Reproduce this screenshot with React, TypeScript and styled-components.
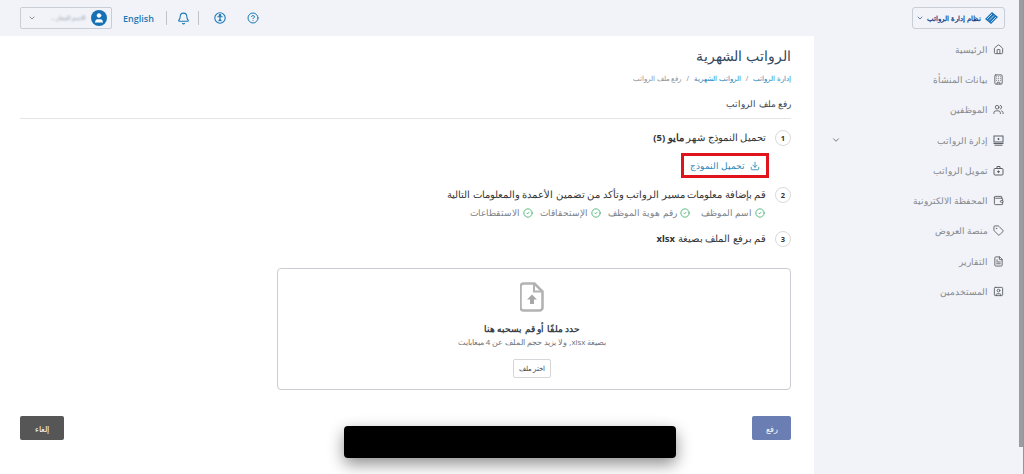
import React from "react";
import styled, { createGlobalStyle } from "styled-components";
import { Home, Building, Users, ChevronDown, Tag, FileText, Download, CircleCheck, Bell, CircleHelp, User, Wallet, SquareUser } from "lucide-react";

const Global = createGlobalStyle`
  html, body { margin: 0; padding: 0; background: #fff; overflow: hidden; }
  body { font-family: "Noto Sans", "Noto Sans CJK SC", "Liberation Sans", sans-serif; }
  * { box-sizing: border-box; }
`;
const Page = styled.div`
  direction: ltr; width: 1024px; height: 474px; display: grid; grid-template-columns: 814px 210px; overflow: hidden; position: relative;
`;
const Main = styled.main`display: flex; flex-direction: column; min-width: 0;`;
const TopBar = styled.header`
  height: 36px; background: #f1f3f8; display: flex; align-items: center; padding-left: 20px; flex: none;
`;
const UserBox = styled.div`
  width: 92px; height: 22px; border: 1px solid #c9cdd6; border-radius: 2px; display: flex; align-items: center; padding: 0 4px 0 7px; justify-content: space-between; color: #4d5b72;
`;
const Blurred = styled.span`font-size: 6px; color: #9aa0ab; filter: blur(1px); margin-left: 10px; direction: rtl; white-space: nowrap;`;
const Avatar = styled.span`
  width: 16px; height: 16px; border-radius: 50%; background: #1670b4; color: #fff; display: flex; align-items: center; justify-content: center;
`;
const Lang = styled.span`font-size: 9px; font-weight: 600; color: #1b79b5; margin: 0 12px 0 11px; font-family: "Open Sans", sans-serif;`;
const Sep = styled.span`width: 1px; height: 14px; background: #bfc4cc;`;
const IconBlue = styled.span`color: #1b79b5; display: flex; align-items: center; margin: 0 ${p => p.$right ?? 0}px 0 ${p => p.$left ?? 0}px;`;
const Content = styled.div`
  flex: 1; direction: rtl; padding: 10px 23px 0 20px; display: flex; flex-direction: column; min-height: 0;
`;
const Title = styled.h1`margin: 0; font-size: 13.5px; font-weight: 400; line-height: 20px; color: #33475b;`;
const Crumbs = styled.div`display: flex; gap: 5px; margin-top: 8px; font-size: 6.8px; line-height: 10px; color: #8b8f96;`;
const Crumb = styled.span`color: ${p => (p.$link ? "#2a86b8" : "#8b8f96")};`;
const Sub = styled.h2`margin: 13px 0 0; font-size: 9.2px; font-weight: 400; line-height: 14px; color: #3d4450; padding-bottom: 7px; border-bottom: 1px solid #e3e5e8;`;
const Step = styled.div`display: flex; align-items: center; gap: 9px; margin-top: ${p => p.$mt}px; height: 16px;`;
const Num = styled.span`
  width: 16px; height: 16px; border-radius: 50%; border: 1px solid #d8dade; font-size: 7.5px; font-weight: 700; color: #333; display: flex; align-items: center; justify-content: center; flex: none; font-family: "Open Sans", sans-serif;
`;
const StepText = styled.span`font-size: 9.5px; color: #333; line-height: 14px; b { font-weight: 700; }`;
const DlRow = styled.div`display: flex; margin: 7px 22px 0 0;`;
const DlLink = styled.a`
  width: 88px; height: 25px; border: 3px solid #e0141c; display: flex; align-items: center; justify-content: center; gap: 5px; color: #2a86b8; font-size: 9px;
`;
const Checks = styled.div`display: flex; margin: 4px 26px 0 0;`;
const Check = styled.span`display: flex; align-items: center; gap: 3px; font-size: 8.8px; line-height: 12px; color: #7b8087; margin-left: ${p => p.$after}px; svg { color: #3fae6a; flex: none; }`;
const Drop = styled.section`
  width: 514px; height: 122px; margin-top: 21px; flex: none; border: 1px solid #c9ccd1; border-radius: 4px; display: flex; flex-direction: column; align-items: center; padding: 13px 4px 0 0;
`;
const DropTitle = styled.div`font-size: 9.2px; font-weight: 600; line-height: 12px; color: #3a3f47; margin-top: 11px;`;
const DropSub = styled.div`font-size: 7.8px; line-height: 12px; color: #70757c; margin-top: 1px;`;
const PickBtn = styled.button`
  width: 38px; height: 19px; margin-top: 11px; background: #fff; border: 1px solid #d4d6da; border-radius: 2px; font: inherit; font-size: 6.5px; color: #444; padding: 0;
`;
const Actions = styled.div`display: flex; justify-content: space-between; margin-top: 26px;`;
const Btn = styled.button`
  width: ${p => p.$w}px; height: 24px; border: 0; border-radius: 2px; background: ${p => p.$bg}; color: #fff; font: inherit; font-size: 8px; padding: 0;
`;
const Redacted = styled.div`
  position: absolute; left: 344px; top: 426px; width: 332px; height: 32px; background: #000; border-radius: 4px; box-shadow: 0 6px 16px rgba(0,0,0,.45);
`;
const Side = styled.aside`
  direction: rtl; background: #f1f3f8; border-right: 1px solid #22dd55; position: relative; display: flex; flex-direction: column; padding: 7px 18px 0 17px;
`;
const Thumb = styled.div`position: absolute; right: 0; top: 0; width: 4px; height: 447px; background: #9a9ca1;`;
const Brand = styled.div`
  width: 93px; height: 22px; border: 1px solid #c9cdd6; border-radius: 3px; display: flex; align-items: center; gap: 3px; padding: 0 5px; color: #1c3f86; font-size: 7.2px; font-weight: 700; white-space: nowrap; margin-bottom: 5px;
  svg { flex: none; }
`;
const BrandText = styled.span`flex: 1;`;
const NavItem = styled.div`
  height: 30.3px; display: flex; align-items: center; gap: 5px; padding-right: 1px; color: #83878e; font-size: 9.2px; svg { color: #5d6168; flex: none; }
`;
const NavLabel = styled.span`flex: 1;`;

const BrandLogo = () => (
  <svg width="15" height="14" viewBox="0 0 15 14" fill="none">
    <path d="M1 8 L8 1 L14 6 L7 13 Z" fill="#1a72b8" />
    <path d="M3 8 L8 3 M5 9.5 L10 4.5 M7 11 L12 6" stroke="#b9d8ee" strokeWidth="1" />
  </svg>
);
const Payroll = () => (
  <svg width="11" height="11" viewBox="0 0 11 11" fill="none" stroke="currentColor" strokeWidth="1">
    <rect x="1" y="1" width="9" height="6" /><path d="M0.5 8.5h10M1.5 10.2h8M4.5 4h2M5.5 3v2" />
  </svg>
);
const Funding = () => (
  <svg width="11" height="11" viewBox="0 0 11 11" fill="none" stroke="currentColor" strokeWidth="1">
    <rect x="1" y="3.5" width="9" height="6.5" rx="1" /><path d="M4 3.5V1.5h3v2M4 6.7h3M5.5 5.4v2.6" />
  </svg>
);
const Access = () => (
  <svg width="12" height="12" viewBox="0 0 12 12" fill="none" stroke="currentColor" strokeWidth="1.1">
    <circle cx="6" cy="6" r="5.2" /><circle cx="6" cy="3.4" r=".8" fill="currentColor" /><path d="M3.4 4.8h5.2M6 4.8v2.4M6 7.2 4.6 9.3M6 7.2l1.4 2.1" />
  </svg>
);
const FileUp = () => (
  <svg width="24" height="30" viewBox="0 0 24 30" fill="none">
    <path d="M3.5 1.5h11l8 8v16a3 3 0 0 1-3 3h-16a3 3 0 0 1-3-3v-21a3 3 0 0 1 3-3Z" stroke="#b3b3b3" strokeWidth="2.6" fill="#fff" />
    <path d="M14 2v7.5h8" stroke="#b3b3b3" strokeWidth="2" />
    <path d="M12 12.5l5 5h-3v4.5h-4v-4.5H7Z" fill="#a8a8a8" />
  </svg>
);

const nav = [
  { t: "الرئيسية", i: <Home size={11} /> },
  { t: "بيانات المنشأة", i: <Building size={11} /> },
  { t: "الموظفين", i: <Users size={11} /> },
  { t: "إدارة الرواتب", i: <Payroll />, more: true },
  { t: "تمويل الرواتب", i: <Funding /> },
  { t: "المحفظة الالكترونية", i: <Wallet size={11} /> },
  { t: "منصة العروض", i: <Tag size={11} /> },
  { t: "التقارير", i: <FileText size={11} /> },
  { t: "المستخدمين", i: <SquareUser size={11} /> },
];

export default function App() {
  return (
    <Page>
      <Global />
      <Main>
        <TopBar>
          <UserBox>
            <ChevronDown size={8} />
            <Blurred>الاسم المعار...</Blurred>
            <Avatar><User size={12} fill="#fff" strokeWidth={1} /></Avatar>
          </UserBox>
          <Lang>English</Lang>
          <Sep />
          <IconBlue $left={10} $right={8}><Bell size={13} /></IconBlue>
          <Sep />
          <IconBlue $left={15}><Access /></IconBlue>
          <IconBlue $left={21}><CircleHelp size={12} /></IconBlue>
        </TopBar>
        <Content>
          <Title>الرواتب الشهرية</Title>
          <Crumbs>
            <Crumb $link>إدارة الرواتب</Crumb><span>/</span>
            <Crumb $link>الرواتب الشهرية</Crumb><span>/</span>
            <Crumb>رفع ملف الرواتب</Crumb>
          </Crumbs>
          <Sub>رفع ملف الرواتب</Sub>
          <Step $mt={11}><Num>1</Num><StepText>تحميل النموذج شهر <b>مايو (5)</b></StepText></Step>
          <DlRow>
            <DlLink><Download size={10} />تحميل النموذج</DlLink>
          </DlRow>
          <Step $mt={9}><Num>2</Num><StepText>قم بإضافة معلومات مسير الرواتب وتأكد من تضمين الأعمدة والمعلومات التالية</StepText></Step>
          <Checks>
            <Check $after={11}><CircleCheck size={10} />اسم الموظف</Check>
            <Check $after={7}><CircleCheck size={10} />رقم هوية الموظف</Check>
            <Check $after={7}><CircleCheck size={10} />الإستحقاقات</Check>
            <Check $after={0}><CircleCheck size={10} />الاستقطاعات</Check>
          </Checks>
          <Step $mt={12}><Num>3</Num><StepText>قم برفع الملف بصيغة <b>xlsx</b></StepText></Step>
          <Drop>
            <FileUp />
            <DropTitle>حدد ملفًا أو قم بسحبه هنا</DropTitle>
            <DropSub>بصيغة xlsx, ولا يزيد حجم الملف عن 4 ميغابايت</DropSub>
            <PickBtn>اختر ملف</PickBtn>
          </Drop>
          <Actions>
            <Btn $w={39} $bg="#6b7eb3">رفع</Btn>
            <Btn $w={44} $bg="#565656">إلغاء</Btn>
          </Actions>
        </Content>
      </Main>
      <Side>
        <Brand><BrandLogo /><BrandText>نظام إدارة الرواتب</BrandText><ChevronDown size={8} /></Brand>
        {nav.map(n => (
          <NavItem key={n.t}>
            {n.i}
            <NavLabel>{n.t}</NavLabel>
            {n.more && <ChevronDown size={10} />}
          </NavItem>
        ))}
        <Thumb />
      </Side>
      <Redacted />
    </Page>
  );
}
